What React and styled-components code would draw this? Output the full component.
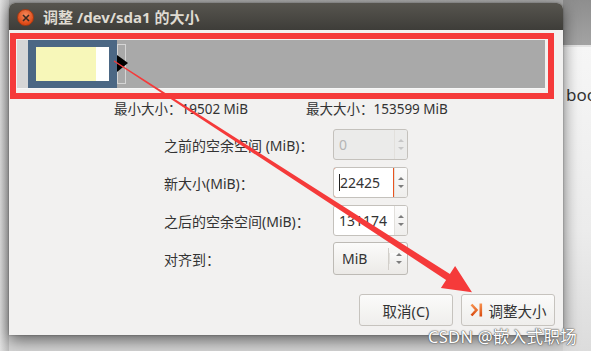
import styled, { createGlobalStyle } from "styled-components";

const Global = createGlobalStyle`
    html, body {
        margin: 0;
        padding: 0;
        background: #cfcfcf;
    }
    body {
        font-family: "Noto Sans", "Noto Sans CJK SC", sans-serif;
        font-size: 14px;
        color: #333;
    }
`

const Desktop = styled.div`
    position: relative;
    width: 591px;
    height: 351px;
    display: flex;
    overflow: hidden;
    background: linear-gradient(#a9a9a9, #d9d9d9 40%, #d4d4d4);
`

const LeftStrip = styled.div`
    width: 9px;
    flex-shrink: 0;
    background: linear-gradient(90deg, #e2e2e2, #bdbdbd);
`

const DialogSlot = styled.div`
    width: 554px;
    flex-shrink: 0;
    padding-top: 3px;
`

const Dialog = styled.div`
    position: relative;
    z-index: 1;
    height: 332px;
    background: #f2f1f0;
    border-radius: 6px 6px 0 0;
    box-shadow: 0 5px 16px rgba(0, 0, 0, 0.55), 0 0 2px rgba(0, 0, 0, 0.4);
    display: flex;
    flex-direction: column;
`

const TitleBar = styled.div`
    height: 27px;
    border-radius: 6px 6px 0 0;
    background: linear-gradient(#57554f, #3e3d39);
    display: flex;
    align-items: center;
    padding-left: 8px;
    gap: 9px;
    color: #dfdbd2;
    font-weight: bold;
    font-size: 15px;
`

const Close = styled.div`
    width: 17px;
    height: 17px;
    margin-top: 2px;
    border-radius: 50%;
    background: radial-gradient(circle at 50% 35%, #f48a5c, #de4a17 70%);
    border: 1px solid #a63a12;
    box-sizing: border-box;
    display: flex;
    align-items: center;
    justify-content: center;
`

const Body = styled.div`
    flex: 1;
    display: flex;
    flex-direction: column;
    padding: 3px 8px 9px 1px;
`

const Highlight = styled.div`
    border: 6px solid #f53a3a;
    padding: 1px 0 4px 1px;
    width: 531px;
`

const Bar = styled.div`
    width: 528px;
    height: 48px;
    display: flex;
    background: #a9a9a9;
    border-bottom: 1px solid #f7f7f7;
`

const Unallocated = styled.div`
    width: ${(p) => p.$w}px;
    background: #d6d6d6;
`

const Partition = styled.div`
    width: ${(p) => p.$w}px;
    background: #4b6784;
    display: flex;
    align-items: center;
    padding-left: 8px;
    box-sizing: border-box;
`

const Used = styled.div`
    width: 60px;
    height: 34px;
    background: #f7f7b9;
`

const Free = styled.div`
    width: 13px;
    height: 34px;
    background: #ffffff;
`

const Handle = styled.div`
    width: 10px;
    display: flex;
    align-items: center;
`

const HandleFrame = styled.div`
    width: 9px;
    height: 40px;
    border: 1px solid #d5d5d5;
    box-sizing: border-box;
`

const Info = styled.div`
    display: flex;
    padding: 0 0 0 104px;
    height: 18px;
    align-items: center;
    font-size: 13.5px;
`

const InfoItem = styled.span`
    width: ${(p) => p.$w}px;
    white-space: nowrap;
`

const Form = styled.div`
    display: grid;
    grid-template-columns: 169px 75px;
    grid-auto-rows: 31px;
    row-gap: 7px;
    padding-left: 154px;
    margin-top: 12px;
    align-items: center;
`

const Label = styled.span`
    font-size: 14px;
    white-space: nowrap;
`

const Spin = styled.div`
    display: flex;
    height: 31px;
    border: 1px solid #c4c1bc;
    border-radius: 3px;
    box-sizing: border-box;
    background: ${(p) => (p.$disabled ? "#ebebea" : "#fff")};
    overflow: hidden;
`

const Entry = styled.div`
    width: 61px;
    box-sizing: border-box;
    display: flex;
    align-items: center;
    padding-left: 5px;
    font-size: 14px;
    color: ${(p) => (p.$disabled ? "#b5b5b5" : "#333")};
    border: ${(p) => (p.$focus ? "1px solid #e9541f" : "1px solid transparent")};
    border-radius: 3px 0 0 3px;
    margin: -1px 0 -1px -1px;
`

const Caret = styled.span`
    width: 1px;
    height: 17px;
    background: #222;
`

const Arrows = styled.div`
    flex: 1;
    display: flex;
    flex-direction: column;
    align-items: center;
    justify-content: center;
    gap: 5px;
    border-left: 1px solid #e2e0dc;
    background: ${(p) => (p.$disabled ? "#ebebea" : "linear-gradient(#fbfbfb, #efeeec)")};
`

const Tri = styled.span`
    width: 0;
    height: 0;
    border-left: 3px solid transparent;
    border-right: 3px solid transparent;
    ${(p) => (p.$down ? "border-top" : "border-bottom")}: 3px solid ${(p) => (p.$disabled ? "#c7c7c7" : "#7d7d7d")};
`

const Combo = styled.div`
    height: 33px;
    display: flex;
    align-items: center;
    border: 1px solid #bdbab5;
    border-radius: 3px;
    box-sizing: border-box;
    background: linear-gradient(#fbfbfa, #eceae7);
    font-size: 14px;
`

const ComboText = styled.span`
    width: 55px;
    padding-left: 8px;
    box-sizing: border-box;
    border-right: 1px solid #d2cfca;
    line-height: 22px;
`

const Buttons = styled.div`
    margin-top: auto;
    display: flex;
    justify-content: flex-end;
    gap: 8px;
`

const Button = styled.div`
    width: 94px;
    height: 32px;
    box-sizing: border-box;
    border: 1px solid #c6c3be;
    border-radius: 3px;
    background: linear-gradient(#fbfbfa, #efeeec);
    display: flex;
    align-items: center;
    justify-content: center;
    gap: 6px;
    font-size: 14.5px;
`

const Behind = styled.div`
    flex: 1;
    min-width: 0;
    display: flex;
    flex-direction: column;
`

const BehindTop = styled.div`
    height: 45px;
    background: linear-gradient(#8e8e8e, #a3a3a3);
    border-bottom: 2px solid #e4e4e4;
`

const BehindPanel = styled.div`
    flex: 1;
    overflow: hidden;
    background: linear-gradient(#f6f6f6, #ececec 60%, #dcdcdc);
    padding: 36px 0 0 3px;
    font-size: 17px;
    white-space: nowrap;
`

const Overlay = styled.svg`
    position: absolute;
    left: 0;
    top: 0;
    z-index: 2;
    pointer-events: none;
`

const Watermark = styled.div`
    position: absolute;
    left: 428px;
    top: 324px;
    z-index: 3;
    font-size: 16.5px;
    color: #fff;
    letter-spacing: 0.3px;
    text-shadow: 0 0 1px #555, 0 0 1px #555, 0 0 2px #777;
    white-space: nowrap;
`

const SpinBox = ({ value, disabled, focus }) => (
    <Spin $disabled={disabled}>
        <Entry $disabled={disabled} $focus={focus}>
            {focus && <Caret />}
            {value}
        </Entry>
        <Arrows $disabled={disabled}>
            <Tri $disabled={disabled} />
            <Tri $down $disabled={disabled} />
        </Arrows>
    </Spin>
)

const ResizeIcon = () => (
    <svg width="13" height="14" viewBox="0 0 13 14">
        <defs>
            <linearGradient id="og" x1="0" y1="0" x2="0" y2="1">
                <stop offset="0" stopColor="#f7924f" />
                <stop offset="1" stopColor="#d94a0f" />
            </linearGradient>
        </defs>
        <polyline points="1.5,1.5 6.5,7 1.5,12.5" fill="none" stroke="url(#og)" strokeWidth="2.6" />
        <rect x="9.5" y="0.5" width="2.6" height="13" fill="url(#og)" />
    </svg>
)

const App = () => {
    return (
        <>
            <Global />
            <Desktop>
                <LeftStrip />
                <DialogSlot>
                    <Dialog>
                        <TitleBar>
                            <Close>
                                <svg width="8" height="8" viewBox="0 0 8 8">
                                    <path d="M1 1 L7 7 M7 1 L1 7" stroke="#3a2a22" strokeWidth="1.6" />
                                </svg>
                            </Close>
                            <span>调整 /dev/sda1 的大小</span>
                        </TitleBar>
                        <Body>
                            <Highlight>
                                <Bar>
                                    <Unallocated $w={11} />
                                    <Partition $w={89}>
                                        <Used />
                                        <Free />
                                    </Partition>
                                    <Handle>
                                        <HandleFrame />
                                    </Handle>
                                </Bar>
                            </Highlight>
                            <Info>
                                <InfoItem $w={192}>最小大小：19502 MiB</InfoItem>
                                <InfoItem>最大大小：153599 MiB</InfoItem>
                            </Info>
                            <Form>
                                <Label>之前的空余空间 (MiB)：</Label>
                                <SpinBox value="0" disabled />
                                <Label>新大小(MiB)：</Label>
                                <SpinBox value="22425" focus />
                                <Label>之后的空余空间(MiB)：</Label>
                                <SpinBox value="131174" />
                                <Label>对齐到：</Label>
                                <Combo>
                                    <ComboText>MiB</ComboText>
                                    <Arrows>
                                        <Tri />
                                        <Tri $down />
                                    </Arrows>
                                </Combo>
                            </Form>
                            <Buttons>
                                <Button>取消(C)</Button>
                                <Button>
                                    <ResizeIcon />
                                    调整大小
                                </Button>
                            </Buttons>
                        </Body>
                    </Dialog>
                </DialogSlot>
                <Behind>
                    <BehindTop />
                    <BehindPanel>boo</BehindPanel>
                </Behind>
                <Overlay width="591" height="351" viewBox="0 0 591 351">
                    <polygon points="117,55 128,63 117,72" fill="#000" />
                    <polygon
                        points="113.7,61.4 446.1,279.9 440.9,287.9 472,292.2 455.1,266.1 449.9,274.1 114.3,60.6"
                        fill="#f53a3a"
                    />
                </Overlay>
                <Watermark>CSDN @嵌入式职场</Watermark>
            </Desktop>
        </>
    );
};

export default App;
